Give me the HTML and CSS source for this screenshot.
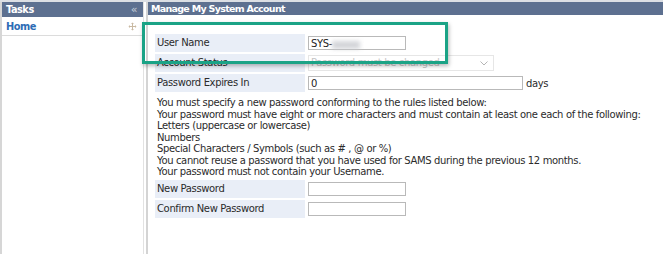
FILE: index.html
```html
<!DOCTYPE html>
<html>
<head>
<meta charset="utf-8">
<link rel="stylesheet" href="styles.css">
</head>
<body>
<div class="page">
  <aside class="sidebar">
    <div class="side-head"><span>Tasks</span><span class="collapse">«</span></div>
    <div class="side-item"><span>Home</span>
      <svg class="move" width="9" height="9" viewBox="0 0 9 9"><path d="M4.5 0.5 L6 2 H5 V4 H7 V3 L8.5 4.5 L7 6 V5 H5 V7 H6 L4.5 8.5 L3 7 H4 V5 H2 V6 L0.5 4.5 L2 3 V4 H4 V2 H3 Z" fill="#c9b9a2"/></svg>
    </div>
  </aside>
  <main class="main">
    <div class="main-head">Manage My System Account</div>
    <div class="content">
      <div class="highlight"></div>
      <div class="rows">
        <div class="row"><div class="label">User Name</div><div class="field"><input class="inp" type="text" value="SYS-"><span class="blur"></span></div></div>
        <div class="row"><div class="label">Account Status</div><div class="field"><div class="select">Password must be changed<svg class="chev" width="8" height="5" viewBox="0 0 8 5"><path d="M0.5 0.5 L4 4 L7.5 0.5" fill="none" stroke="#b5b5b5" stroke-width="1"/></svg></div></div></div>
        <div class="row"><div class="label">Password Expires In</div><div class="field"><input class="inp wide" type="text" value="0"><span class="days">days</span></div></div>
      </div>
      <div class="rules">
        <div>You must specify a new password conforming to the rules listed below:</div>
        <div>Your password must have eight or more characters and must contain at least one each of the following:</div>
        <div>Letters (uppercase or lowercase)</div>
        <div>Numbers</div>
        <div>Special Characters / Symbols (such as # , @ or %)</div>
        <div>You cannot reuse a password that you have used for SAMS during the previous 12 months.</div>
        <div>Your password must not contain your Username.</div>
      </div>
      <div class="rows">
        <div class="row"><div class="label">New Password</div><div class="field"><input class="inp" type="password"></div></div>
        <div class="row"><div class="label">Confirm New Password</div><div class="field"><input class="inp" type="password"></div></div>
      </div>
    </div>
  </main>
</div>
</body>
</html>
```
FILE: styles.css
```css
html, body {
  margin: 0;
  padding: 0;
  background: #fff;
  font-family: "DejaVu Sans", Verdana, sans-serif;
  font-size: 10px;
  letter-spacing: -0.36px;
  color: #2b2b2b;
}
.page {
  display: flex;
  height: 254px;
  padding-top: 2px;
  box-sizing: border-box;
  background: linear-gradient(#dcdfe4 0, #dcdfe4 2px, #fff 2px);
}
.sidebar {
  width: 141px;
  border-left: 2px solid #d6d6d6;
  border-right: 1px solid #e2e2e2;
  background: #fff;
  flex: none;
}
.side-head {
  height: 15px;
  background: #5d7090;
  color: #fff;
  font-weight: bold;
  font-size: 9.8px;
  letter-spacing: -0.5px;
  display: flex;
  align-items: center;
  justify-content: space-between;
  padding: 0 6px 0 4px;
}
.collapse {
  color: #c8d0dc;
  font-size: 11px;
  font-weight: normal;
}
.side-item {
  height: 18px;
  border-bottom: 1px solid #dcdcdc;
  display: flex;
  align-items: center;
  justify-content: space-between;
  padding: 0 6px 0 4px;
  color: #2d6cb5;
  font-weight: bold;
  font-size: 9.8px;
  letter-spacing: -0.5px;
}
.main {
  flex: 1;
  margin-left: 2px;
  border-left: 2px solid #d4d4d4;
  min-width: 0;
}
.main-head {
  height: 13px;
  line-height: 13px;
  background: #5d7090;
  color: #fff;
  font-weight: bold;
  font-size: 9.5px;
  letter-spacing: -0.7px;
  padding-left: 3px;
}
.content {
  position: relative;
  padding: 19px 0 0 7px;
}
.highlight {
  position: absolute;
  left: -6px;
  top: 7px;
  width: 300px;
  height: 36px;
  border: 3px solid #1ba386;
  box-shadow: 1px 2px 4px rgba(0, 0, 0, 0.28);
  pointer-events: none;
  z-index: 2;
}
.rows {
  display: flex;
  flex-direction: column;
  gap: 2px;
}
.row {
  display: flex;
  align-items: center;
  height: 18px;
}
.label {
  width: 148px;
  height: 18px;
  line-height: 18px;
  background: #e9eef7;
  padding-left: 2px;
  flex: none;
  color: #2b2b2b;
}
.field {
  display: flex;
  align-items: center;
  padding-left: 3px;
  position: relative;
}
.inp {
  width: 98px;
  height: 14px;
  box-sizing: border-box;
  border: 1px solid #b9b9b9;
  padding: 0 2px;
  font-family: "DejaVu Sans", Verdana, sans-serif;
  font-size: 10px;
  letter-spacing: -0.36px;
  color: #222;
  margin: 0;
  background: #fff;
}
.inp.wide {
  width: 215px;
}
.blur {
  position: absolute;
  left: 27px;
  top: 5px;
  width: 28px;
  height: 8px;
  background: #c9cbd0;
  filter: blur(2px);
  opacity: 0.8;
}
.days {
  margin-left: 3px;
}
.select {
  width: 186px;
  height: 16px;
  box-sizing: border-box;
  border: 1px solid #e6e6e6;
  color: #c4c4c4;
  padding-left: 2px;
  line-height: 14px;
  display: flex;
  align-items: center;
  justify-content: space-between;
  padding-right: 5px;
}
.rules {
  margin-top: 5px;
  margin-bottom: 2px;
  line-height: 11.5px;
  padding-left: 2px;
  color: #2b2b2b;
}
```
